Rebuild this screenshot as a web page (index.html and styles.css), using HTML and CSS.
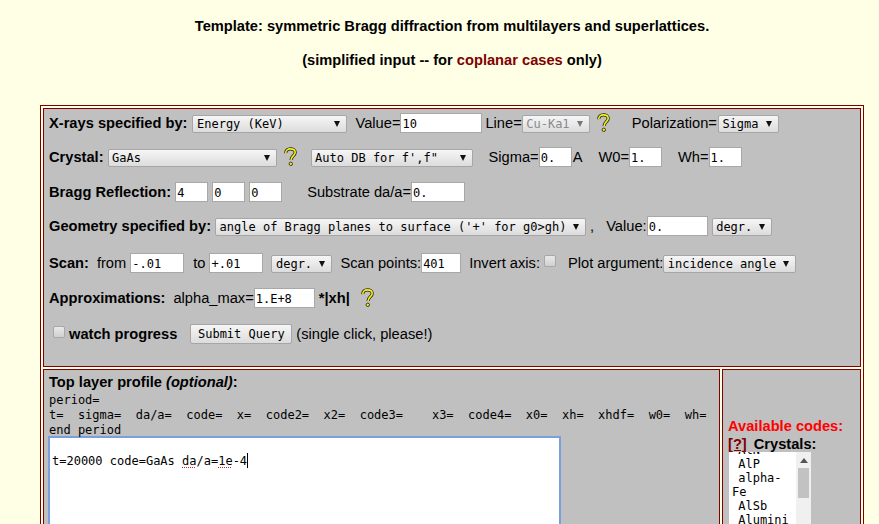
FILE: index.html
```html
<!DOCTYPE html>
<html lang="en">
<head>
<meta charset="utf-8">
<title>Template: symmetric Bragg diffraction</title>
<link rel="stylesheet" href="styles.css">
</head>
<body>
<header class="head">
  <h1>Template: symmetric Bragg diffraction from multilayers and superlattices.</h1>
  <h2>(simplified input -- for <span class="maroon">coplanar cases</span> only)</h2>
</header>
<form class="frame">
  <section class="cell top">
    <div class="row r1">
      <b>X-rays specified by:</b>
      <span class="sel w155 ml5">Energy (KeV)</span>
      <span class="ml8">Value=</span><span class="inp w82">10</span>
      <span class="ml3">Line=</span><span class="sel w68 off">Cu-Ka1</span>
      <svg class="q" viewBox="0 0 15 20"><use href="#qm"/></svg>
      <span class="ml21">Polarization=</span><span class="sel w61 ml1">Sigma</span>
    </div>
    <div class="row r2">
      <b>Crystal:</b>
      <span class="sel w169 ml4">GaAs</span>
      <svg class="q" viewBox="0 0 15 20"><use href="#qm"/></svg>
      <span class="sel w162 ml13">Auto DB for f',f"</span>
      <span class="ml16">Sigma=</span><span class="inp w33">0.</span>
      <span class="ml1">A</span>
      <span class="ml16">W0=</span><span class="inp w33">1.</span>
      <span class="ml16">Wh=</span><span class="inp w33">1.</span>
    </div>
    <div class="row r3">
      <b>Bragg Reflection:</b>
      <span class="inp w33 ml4">4</span><span class="inp w33 ml4">0</span><span class="inp w33 ml4">0</span>
      <span class="ml25">Substrate da/a=</span><span class="inp w54">0.</span>
    </div>
    <div class="row r4">
      <b>Geometry specified by:</b>
      <span class="sel w371 ml4">angle of Bragg planes to surface ('+' for g0&gt;gh)</span>
      <span class="ml4">,</span>
      <span class="ml12">Value:</span><span class="inp w61">0.</span>
      <span class="sel w60 ml4">degr.</span>
    </div>
    <div class="row r5">
      <b>Scan:</b>
      <span class="ml8">from</span><span class="inp w54 ml4">-.01</span>
      <span class="ml9">to</span><span class="inp w54 ml4">+.01</span>
      <span class="sel w61 ml8">degr.</span>
      <span class="ml8">Scan points:</span><span class="inp w40">401</span>
      <span class="ml8">Invert axis:</span>
      <span class="chk ml4"></span>
      <span class="ml12">Plot argument:</span><span class="sel w133">incidence angle</span>
    </div>
    <div class="row r6">
      <b>Approximations:</b>
      <span class="ml8">alpha_max=</span><span class="inp w61">1.E+8</span>
      <b class="ml4">*|xh|</b>
      <svg class="q q10" viewBox="0 0 15 20"><use href="#qm"/></svg>
    </div>
    <div class="row r7">
      <span class="chk ml4"></span>
      <b class="ml4">watch progress</b>
      <button type="button" class="btn">Submit Query</button>
      <span class="ml4">(single click, please!)</span>
    </div>
  </section>
  <div class="lower">
    <section class="cell left">
      <div class="ltitle"><b>Top layer profile <i>(optional)</i>:</b></div>
      <pre class="hint">period=
t=  sigma=  da/a=  code=  x=  code2=  x2=  code3=    x3=  code4=  x0=  xh=  xhdf=  w0=  wh=
end period</pre>
      <div class="area" role="textbox"><br>t=20000 code=GaAs <span class="spell">da</span>/a=<span class="spell">1e</span>-4<span class="caret"></span></div>
    </section>
    <section class="cell right">
      <div class="avail">Available codes:</div>
      <div class="cryst"><a class="qlink">[?]</a><b class="ml7">Crystals:</b></div>
      <div class="list">
        <div class="opts">
          <div class="opt clip">&nbsp;AlN</div>
          <div class="opt">&nbsp;AlP</div>
          <div class="opt">&nbsp;alpha-Fe</div>
          <div class="opt">&nbsp;AlSb</div>
          <div class="opt">&nbsp;Aluminium</div>
        </div>
        <div class="sbar"><span class="up"></span><span class="thumb"></span></div>
      </div>
    </section>
  </div>
</form>
<svg class="defs" width="0" height="0" aria-hidden="true">
  <symbol id="qm" viewBox="0 0 15 20">
    <path d="M2.8 6.2C2.6 3.4 4.6 1.9 7.4 1.9c2.8 0 4.8 1.4 4.8 3.5 0 3-3.9 3.6-4.2 7.6" fill="none" stroke="#2a2a10" stroke-width="3.2"/>
    <path d="M2.8 6.2C2.6 3.4 4.6 1.9 7.4 1.9c2.8 0 4.8 1.4 4.8 3.5 0 3-3.9 3.6-4.2 7.6" fill="none" stroke="#f4f020" stroke-width="1.6"/>
    <circle cx="7.8" cy="16.8" r="1.7" fill="#f4f020" stroke="#2a2a10" stroke-width="0.9"/>
  </symbol>
</svg>
</body>
</html>
```
FILE: styles.css
```css
html, body { margin: 0; padding: 0; height: 524px; overflow: hidden; }
body { background: #ffffe6; font: 14.667px/17px "Liberation Sans", Arial, sans-serif; color: #000; width: 879px; position: relative; }
b { font-weight: bold; }
.defs { position: absolute; }
.head { text-align: center; padding: 18px 0 0; height: 105px; box-sizing: border-box; width: 904px; }
.head h1, .head h2 { margin: 0; font-size: 14.667px; line-height: 17px; font-weight: bold; }
.head h2 { margin-top: 17px; }
.maroon { color: #800000; }
.frame { box-sizing: border-box; margin-left: 40px; width: 824px; border: 1px solid #800000; padding: 2px; height: 500px; display: flex; flex-direction: column; gap: 2px; }
.cell { border: 1px solid #800000; background: #c0c0c0; box-sizing: border-box; }
.top { height: 259px; padding: 0 5px; flex: none; }
.lower { display: flex; gap: 2px; flex: 1; min-height: 0; }
.left { width: 677px; flex: none; padding: 4px 5px; }
.right { flex: 1; padding: 47px 5px 0; }
.row { display: flex; align-items: center; height: 20px; white-space: nowrap; }
.r1 { margin-top: 4px; }
.r2 { margin-top: 14px; }
.r3 { margin-top: 15px; }
.r4 { margin-top: 14px; }
.r5 { margin-top: 17px; }
.r6 { margin-top: 15px; }
.r7 { margin-top: 16px; }
.sel, .inp, .btn { font: 12px/15px "DejaVu Sans Mono", monospace; color: #000; box-sizing: border-box; flex: none; }
.sel { height: 18px; line-height: 17px; border: 1px solid #a6a6a6; border-radius: 2px; background: linear-gradient(#f6f6f6, #dcdcdc); padding: 0 0 0 3.5px; position: relative; display: block; top: 1px; }
.sel::after { content: ""; position: absolute; right: 6px; top: 5px; border: 3px solid transparent; border-top: 6px solid #111; border-bottom: 0; }
.off { color: #8a8a8a; }
.off::after { border-top-color: #777; }
.inp { height: 20px; background: #fff; border: 1px solid #a8a8a8; padding: 3px 0 0 1px; display: block; }
.btn { height: 20px; padding: 0; width: 102px; margin-left: 13px; border: 1px solid #a6a6a6; border-radius: 2px; background: linear-gradient(#f6f6f6, #dcdcdc); }
.chk { display: block; width: 12px; height: 12px; box-sizing: border-box; border: 1px solid #a8a8a8; border-radius: 2px; background: linear-gradient(#e8e8e8, #d0d0d0); flex: none; position: relative; top: -2px; }
.q { width: 15px; height: 20px; flex: none; margin-left: 6px; }
.q10 { margin-left: 10px; }
.w33 { width: 33px; } .w40 { width: 40px; } .w54 { width: 54px; } .w60 { width: 60px; } .w61 { width: 61px; } .w68 { width: 68px; } .w82 { width: 82px; } .w133 { width: 133px; } .w155 { width: 155px; } .w162 { width: 162px; } .w169 { width: 169px; } .w371 { width: 371px; }
.ml1 { margin-left: 1px; } .ml3 { margin-left: 3px; } .ml4 { margin-left: 4px; } .ml5 { margin-left: 5px; } .ml7 { margin-left: 7px; } .ml8 { margin-left: 8px; } .ml9 { margin-left: 9px; } .ml12 { margin-left: 12px; } .ml13 { margin-left: 13px; } .ml16 { margin-left: 16px; } .ml21 { margin-left: 21px; } .ml25 { margin-left: 25px; }
.ltitle { height: 19px; }
.hint { margin: 0; font: 12px/15px "DejaVu Sans Mono", monospace; }
.area { width: 513px; height: 200px; box-sizing: border-box; border: 2px solid #7b9fdc; background: #fff; font: 12px/15px "DejaVu Sans Mono", monospace; padding: 0 2px; margin: -2px 0 0 -1px; white-space: pre; }
.spell { text-decoration: underline dotted #e02020 1px; text-underline-offset: 2px; }
.caret { display: inline-block; width: 1px; height: 15px; background: #000; vertical-align: -3px; }
.avail { color: #ff0000; font-weight: bold; height: 18px; line-height: 18px; }
.cryst { height: 18px; line-height: 18px; white-space: nowrap; }
.qlink { color: #800000; font-weight: bold; text-decoration: underline; }
.list { width: 82px; height: 200px; background: #fff; display: flex; overflow: hidden; margin-left: 1px; margin-top: -1px; }
.opts { width: 67px; font: 12px/14px "DejaVu Sans Mono", monospace; padding: 0 2px 0 3px; box-sizing: border-box; overflow: hidden; flex: none; word-spacing: -1px; }
.opt { overflow-wrap: anywhere; }
.clip { margin-top: -9px; }
.sbar { width: 15px; background: #f0f0f0; display: flex; flex-direction: column; align-items: center; }
.up { border: 4px solid transparent; border-bottom: 5px solid #555; border-top: 0; margin: 6px 0 5px; }
.thumb { width: 11px; height: 30px; background: #c2c2c2; }
```
